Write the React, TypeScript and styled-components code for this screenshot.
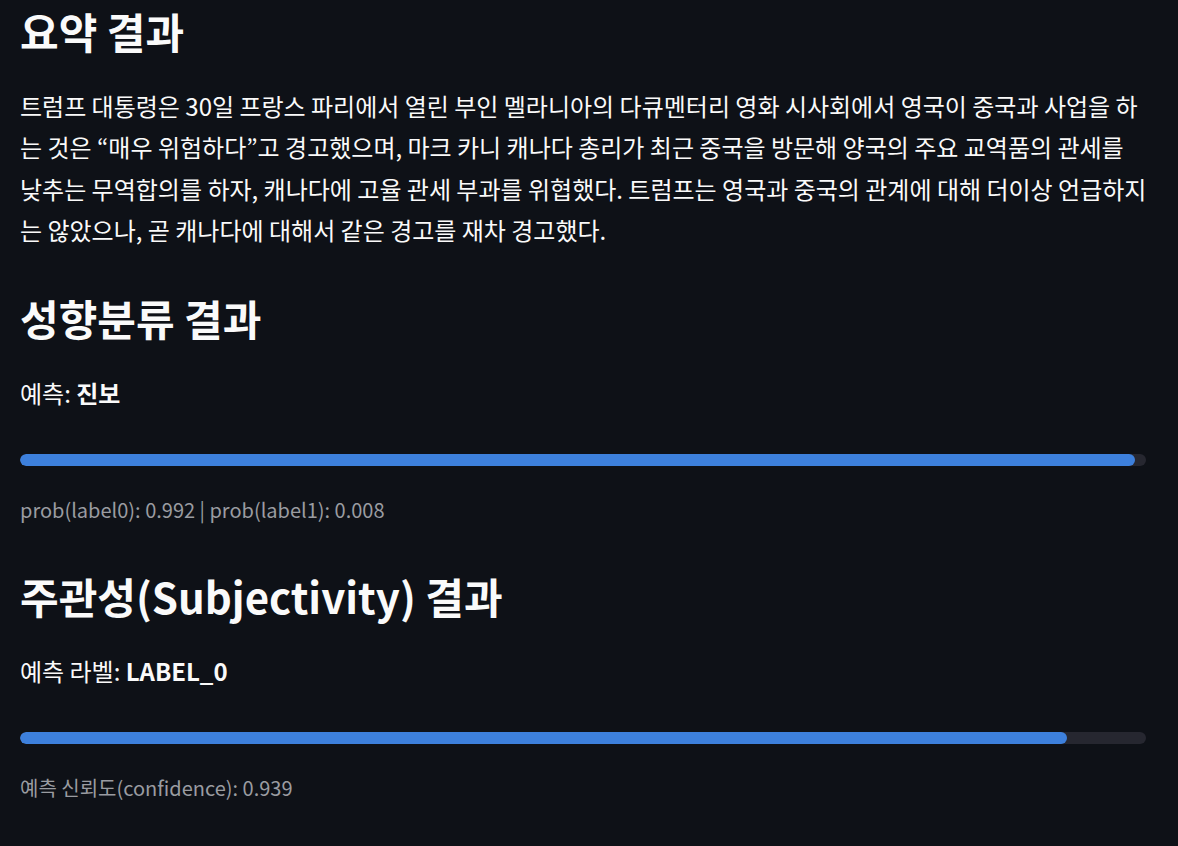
import React from "react";
import styled, { createGlobalStyle } from "styled-components";

const GlobalStyle = createGlobalStyle`
  html, body {
    margin: 0;
    padding: 0;
    background: #0e1117;
  }
  body {
    font-family: "Noto Sans CJK KR", "Noto Sans", sans-serif;
    color: #fafafa;
  }
`;

const summary =
  "트럼프 대통령은 30일 프랑스 파리에서 열린 부인 멜라니아의 다큐멘터리 영화 시사회에서 영국이 중국과 사업을 하는 것은 “매우 위험하다”고 경고했으며, 마크 카니 캐나다 총리가 최근 중국을 방문해 양국의 주요 교역품의 관세를 낮추는 무역합의를 하자, 캐나다에 고율 관세 부과를 위협했다. 트럼프는 영국과 중국의 관계에 대해 더이상 언급하지는 않았으나, 곧 캐나다에 대해서 같은 경고를 재차 경고했다.";

function App() {
  return (
    <Page>
      <GlobalStyle />
      <Section>
        <Heading>요약 결과</Heading>
        <Paragraph>{summary}</Paragraph>
      </Section>

      <Section>
        <Heading>성향분류 결과</Heading>
        <Label>
          예측: <strong>진보</strong>
        </Label>
        <Progress value={99} />
        <Caption>prob(label0): 0.992 | prob(label1): 0.008</Caption>
      </Section>

      <Section>
        <Heading>주관성(Subjectivity) 결과</Heading>
        <Label>
          예측 라벨: <strong>LABEL_0</strong>
        </Label>
        <Progress value={93} />
        <Caption>예측 신뢰도(confidence): 0.939</Caption>
      </Section>
    </Page>
  );
}

function Progress({ value }: { value: number }) {
  return (
    <Track>
      <Fill style={{ width: `${value}%` }} />
    </Track>
  );
}

export default App;

const Page = styled.main`
  width: 1126px;
  padding: 6px 20px 0;
  display: flex;
  flex-direction: column;
`;

const Section = styled.section`
  display: flex;
  flex-direction: column;
  & + & {
    margin-top: 43px;
  }
`;

const Heading = styled.h2`
  margin: 0 0 29px;
  font-size: 42px;
  line-height: 50px;
  font-weight: 700;
`;

const Paragraph = styled.p`
  margin: 0 -5px 0 0;
  font-size: 24px;
  line-height: 41.3px;
  font-weight: 400;
`;

const Label = styled.p`
  margin: 0 0 41px;
  font-size: 24px;
  line-height: 41px;
  font-weight: 400;

  strong {
    font-weight: 700;
  }
`;

const Track = styled.div`
  height: 12px;
  border-radius: 6px;
  background: #262730;
  overflow: hidden;
`;

const Fill = styled.div`
  height: 100%;
  border-radius: 6px;
  background: #3d80dc;
`;

const Caption = styled.p`
  margin: 29px 0 3px;
  font-size: 20px;
  line-height: 30px;
  color: #9a9ca1;
`;
